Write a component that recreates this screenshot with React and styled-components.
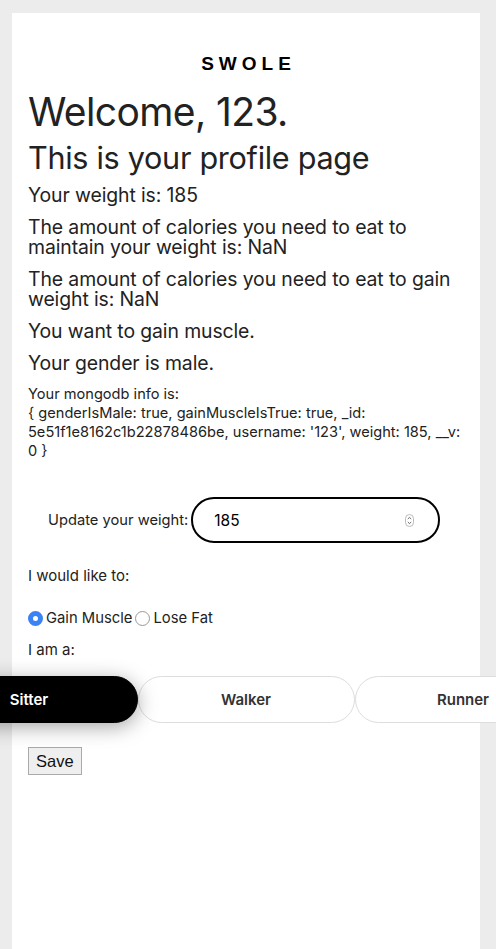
import React from "react";
import styled, { createGlobalStyle } from "styled-components";

const Global = createGlobalStyle`
  html, body { margin: 0; padding: 0; background: #ececec; }
  body { font-family: Inter, "Noto Sans", sans-serif; color: #222; overflow: hidden; }
`;

const Page = styled.div`
  padding: 13px 16px 0 12px;
  min-height: 100vh;
  box-sizing: border-box;
  display: flex;
`;

const Card = styled.main`
  width: 468px;
  min-height: calc(100vh - 13px);
  background: #fff;
  padding: 40px 16px 0 16px;
  box-sizing: border-box;
`;

const Logo = styled.div`
  font-family: "Liberation Sans", Arial, sans-serif;
  font-weight: 700;
  font-size: 19px;
  letter-spacing: 5px;
  padding-left: 5px;
  text-align: center;
  color: #000;
  margin-bottom: 14px;
`;

const Title = styled.h1`
  font-size: 39px;
  font-weight: 400;
  margin: 0;
  line-height: 46px;
  letter-spacing: -0.6px;
`;

const Subtitle = styled.h2`
  font-size: 30.6px;
  font-weight: 400;
  margin: 5px 0 9px;
  line-height: 36px;
  letter-spacing: -0.3px;
`;

const Stat = styled.p`
  font-size: 19.4px;
  line-height: 20px;
  margin: 0 0 12px;
  letter-spacing: -0.1px;
`;

const Info = styled.p`
  font-size: 14.6px;
  line-height: 19px;
  margin: 5px 0 0;
`;

const WeightRow = styled.div`
  display: flex;
  align-items: center;
  gap: 3px;
  margin: 36px 0 0 20px;
`;

const Label = styled.span`
  font-size: 14.7px;
`;

const NumberBox = styled.div`
  width: 249px;
  height: 46px;
  box-sizing: border-box;
  border: 2px solid #000;
  border-radius: 23px;
  display: flex;
  align-items: center;
  padding: 0 24px 0 21px;
  font-size: 15.5px;
  color: #000;
`;

const NumberValue = styled.span`
  flex: 1;
`;

const Spinner = styled.svg`
  display: block;
`;

const Prompt = styled.div`
  font-size: 15px;
  margin: ${(p) => p.$top}px 0 0;
`;

const RadioRow = styled.div`
  display: flex;
  align-items: center;
  margin-top: 24px;
  font-size: 14.8px;
`;

const RadioDot = styled.span`
  width: 15px;
  height: 15px;
  border-radius: 50%;
  box-sizing: border-box;
  margin: 0 3px 0 ${(p) => (p.$on ? 0 : 3)}px;
  border: ${(p) => (p.$on ? "5px solid #3b82f6" : "1px solid #999")};
  background: #fff;
  display: inline-block;
`;

const ChoiceRow = styled.div`
  display: flex;
  justify-content: center;
  margin: 17px 0 0;
`;

const Choice = styled.div`
  flex: 0 0 217px;
  height: 47px;
  box-sizing: border-box;
  border-radius: 24px;
  display: flex;
  align-items: center;
  justify-content: center;
  font-size: 15px;
  font-weight: 600;
  color: ${(p) => (p.$active ? "#fff" : "#333")};
  background: ${(p) => (p.$active ? "#000" : "#fff")};
  border: 1px solid ${(p) => (p.$active ? "#000" : "#ddd")};
  box-shadow: ${(p) => (p.$active ? "0 4px 20px rgba(0,0,0,0.35)" : "none")};
  position: relative;
  z-index: ${(p) => (p.$active ? 1 : 0)};
`;

const SaveButton = styled.button`
  display: block;
  margin-top: 24px;
  height: 28px;
  font-family: "Liberation Sans", Arial, sans-serif;
  font-size: 16.5px;
  padding: 0 7px;
  background: #efefef;
  border: 1px solid #aaa;
  color: #111;
  border-radius: 0;
`;

export default function App() {
  return (
    <>
      <Global />
      <Page>
        <Card>
          <Logo>SWOLE</Logo>
          <Title>Welcome, 123.</Title>
          <Subtitle>This is your profile page</Subtitle>
          <Stat>Your weight is: 185</Stat>
          <Stat>The amount of calories you need to eat to maintain your weight is: NaN</Stat>
          <Stat>The amount of calories you need to eat to gain weight is: NaN</Stat>
          <Stat>You want to gain muscle.</Stat>
          <Stat>Your gender is male.</Stat>
          <Info>
            Your mongodb info is:
            <br />
            {"{ genderIsMale: true, gainMuscleIsTrue: true, _id: 5e51f1e8162c1b22878486be, username: '123', weight: 185, __v: 0 }"}
          </Info>
          <WeightRow>
            <Label>Update your weight:</Label>
            <NumberBox>
              <NumberValue>185</NumberValue>
              <Spinner width="9" height="13" viewBox="0 0 9 13">
                <rect x="0.5" y="0.5" width="8" height="12" rx="4" fill="#fff" stroke="#bbb" />
                <path d="M2.8 5 L4.5 3.4 L6.2 5 M2.8 8 L4.5 9.6 L6.2 8" fill="none" stroke="#555" strokeWidth="0.9" />
              </Spinner>
            </NumberBox>
          </WeightRow>
          <Prompt $top={23}>I would like to:</Prompt>
          <RadioRow>
            <RadioDot $on />
            <span>Gain Muscle</span>
            <RadioDot />
            <span>Lose Fat</span>
          </RadioRow>
          <Prompt $top={13}>I am a:</Prompt>
          <ChoiceRow>
            <Choice $active>Sitter</Choice>
            <Choice>Walker</Choice>
            <Choice>Runner</Choice>
          </ChoiceRow>
          <SaveButton>Save</SaveButton>
        </Card>
      </Page>
    </>
  );
}
